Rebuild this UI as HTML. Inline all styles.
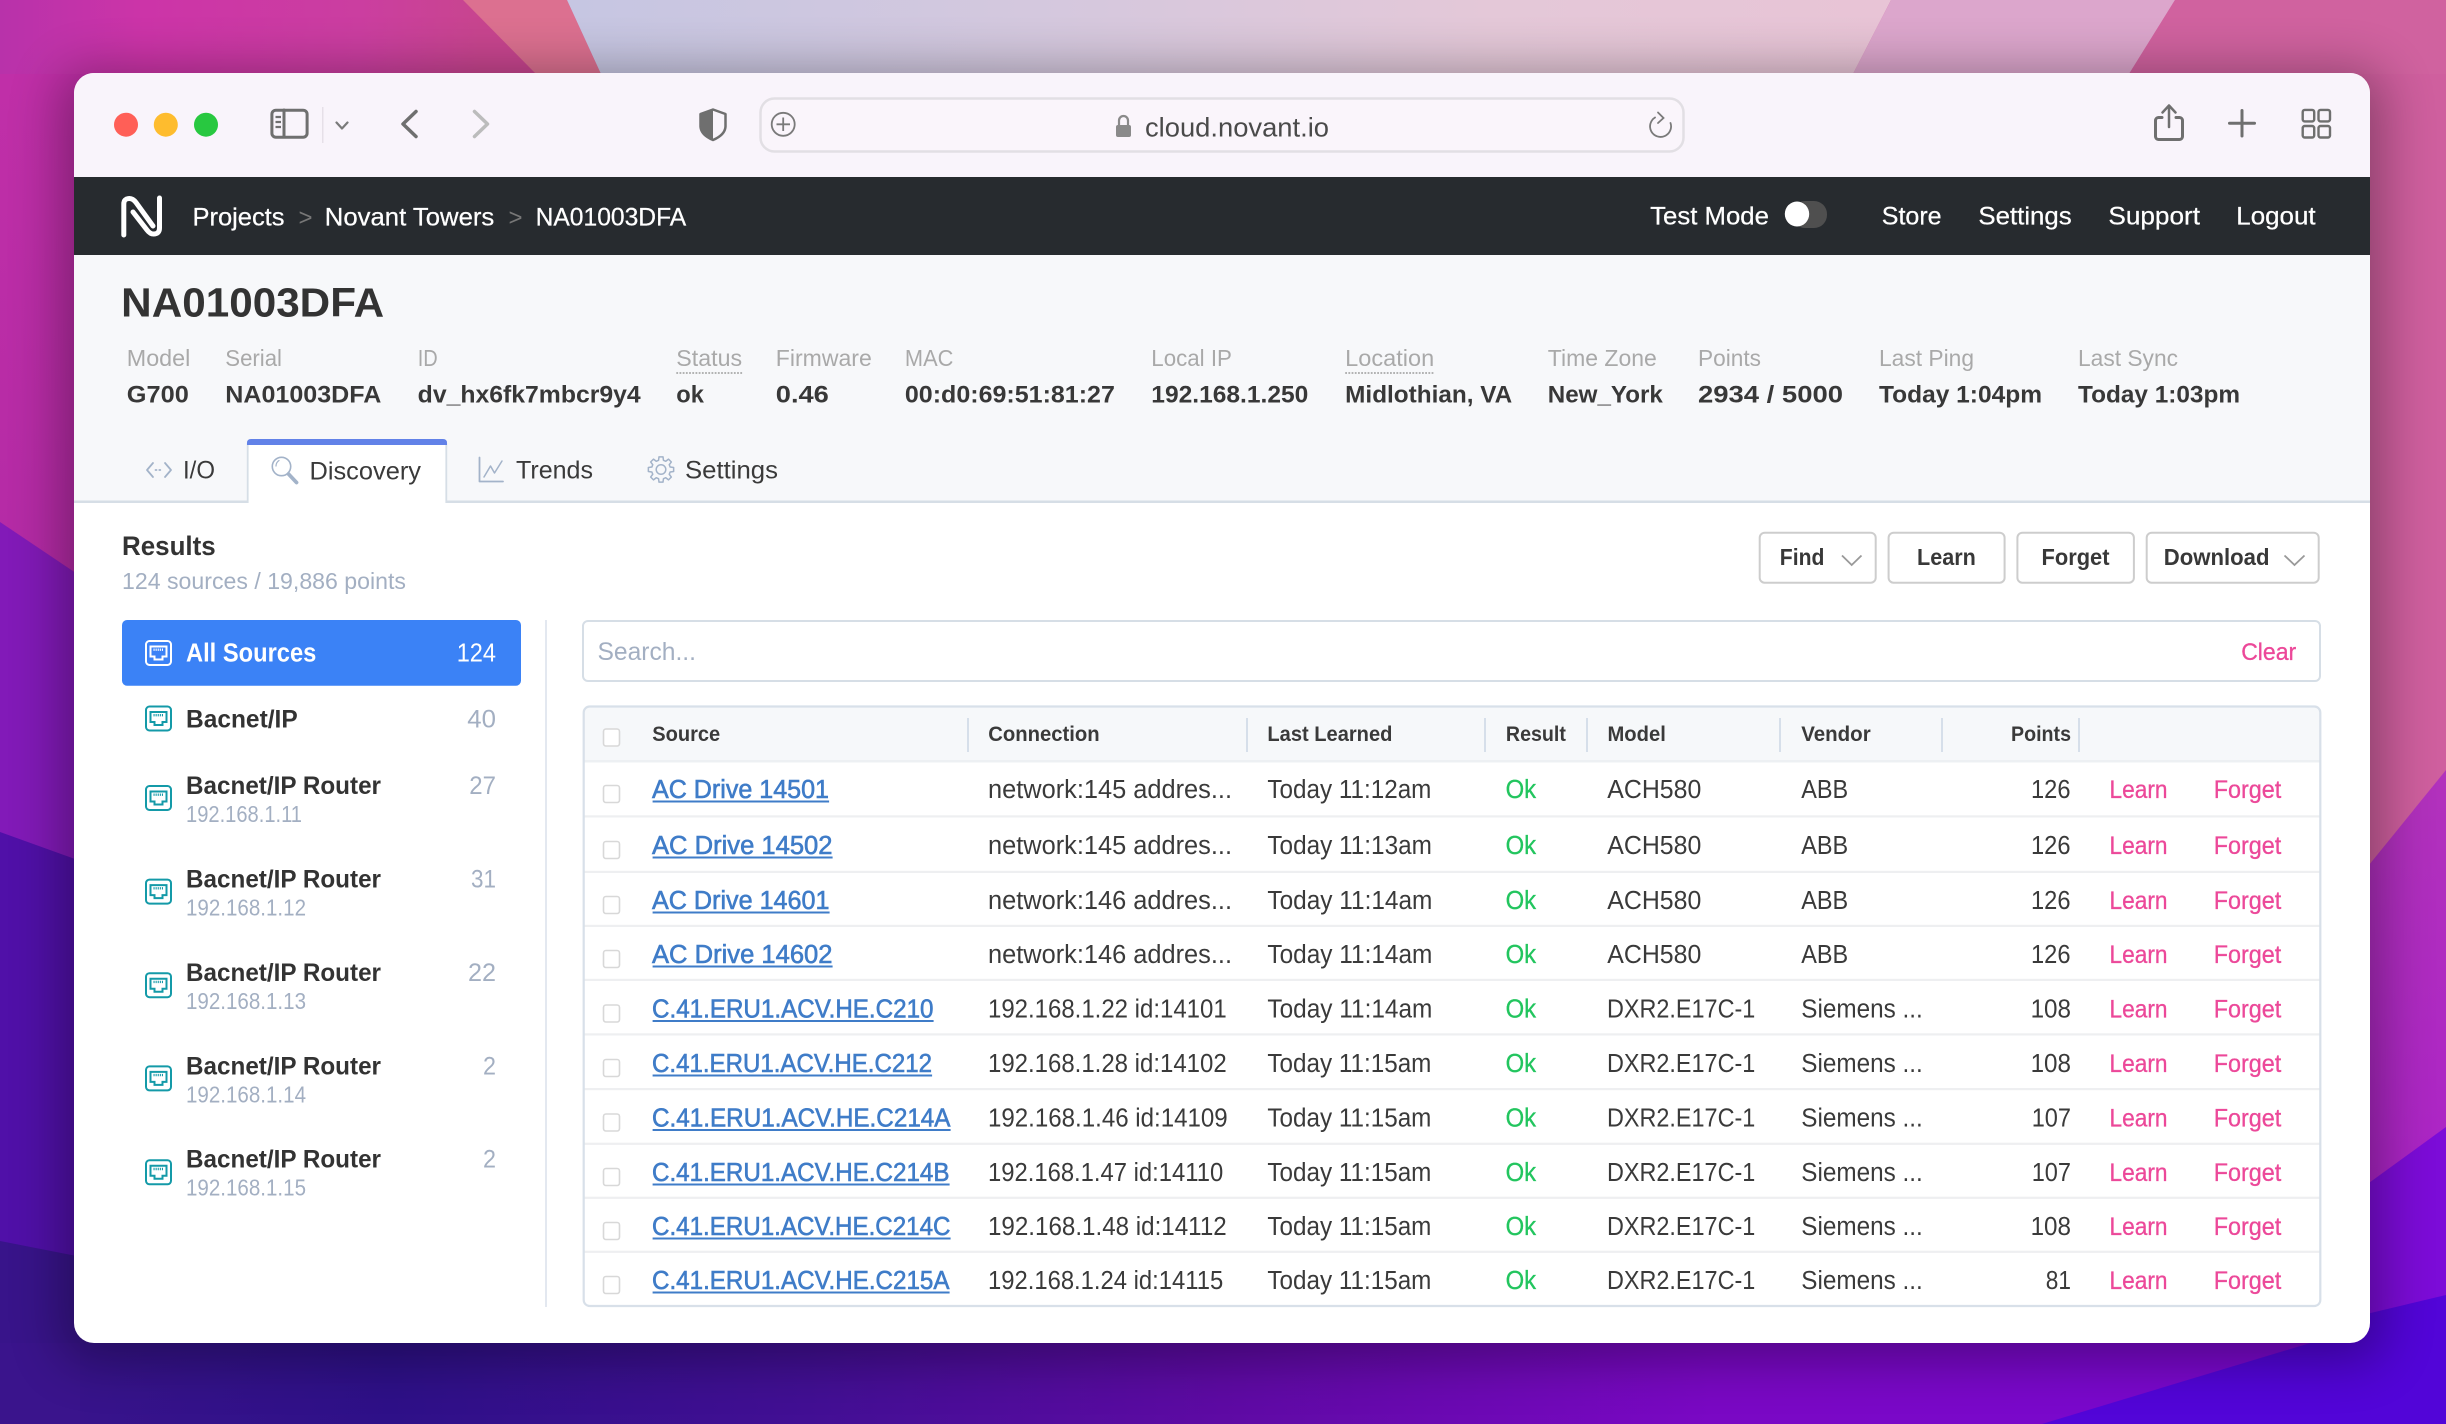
<!DOCTYPE html>
<html lang="en"><head><meta charset="utf-8"><title>cloud.novant.io</title>
<style>
html,body{margin:0;padding:0;width:2446px;height:1424px;overflow:hidden;background:#5a0aa0}
svg{display:block}
text{font-family:"Liberation Sans",Arial,sans-serif;white-space:pre}
.c{font-size:25.5px;fill:#3a3a3a}
.l{font-size:25.5px;fill:#3f7cc8;stroke:#3f7cc8;stroke-width:.6px}
.p{font-size:25px;fill:#ec4899;stroke:#ec4899;stroke-width:.3px}
.g{font-size:25.5px;fill:#22c55e;stroke:#22c55e;stroke-width:.3px}
.h{font-size:21.5px;font-weight:700;fill:#3a3a3a}
.k{font-size:23px;fill:#a9a9a9}
.v{font-size:24px;font-weight:700;fill:#383838}
.n{font-size:25px;fill:#fff;stroke:#fff;stroke-width:.25px}
.t{font-size:25px;fill:#3a3a3a}
.s{font-size:25px;font-weight:700;fill:#333}
.a{font-size:23.5px;fill:#a3afc2}
.m{font-size:25px;fill:#a3afc2}
.b{font-size:23.5px;font-weight:700;fill:#383838}
.ic{fill:none;stroke:#a3b3c9;stroke-width:1.8;stroke-linecap:round;stroke-linejoin:round}
.tb{fill:none;stroke:#6f6f6f;stroke-width:3;stroke-linecap:round;stroke-linejoin:round}
.cb{fill:#fff;stroke:#d8d8d8;stroke-width:1.6}
.sp{fill:#eeeff1}
.u{fill:#3f7cc8}
.vs{fill:#d6dfea}
</style></head><body>
<svg xmlns="http://www.w3.org/2000/svg" width="2446" height="1424" viewBox="0 0 2446 1424">
<defs>
<linearGradient id="gl" x1="0" y1="0" x2="0" y2="1"><stop offset="0" stop-color="#c230a8"/><stop offset="1" stop-color="#9f22a2"/></linearGradient>
<linearGradient id="gt" gradientUnits="userSpaceOnUse" x1="0" y1="0" x2="480" y2="0"><stop offset="0" stop-color="#b832aa"/><stop offset=".3" stop-color="#cc34a8"/><stop offset=".75" stop-color="#cb3ea0"/><stop offset="1" stop-color="#c8458f"/></linearGradient>
<linearGradient id="gv" gradientUnits="userSpaceOnUse" x1="570" y1="0" x2="1890" y2="0"><stop offset="0" stop-color="#c6c6e2"/><stop offset=".35" stop-color="#d4c8de"/><stop offset=".7" stop-color="#e4c8d8"/><stop offset="1" stop-color="#e8c4d6"/></linearGradient>
<linearGradient id="gb" gradientUnits="userSpaceOnUse" x1="0" y1="0" x2="2446" y2="0"><stop offset="0" stop-color="#3a148c"/><stop offset=".16" stop-color="#2e1088"/><stop offset=".33" stop-color="#420f94"/><stop offset=".5" stop-color="#5e0aa4"/><stop offset=".7" stop-color="#7a08c4"/><stop offset=".85" stop-color="#7a08cc"/><stop offset="1" stop-color="#7a08cc"/></linearGradient>
<linearGradient id="gr" x1="0" y1="0" x2="0" y2="1"><stop offset="0" stop-color="#b232bc"/><stop offset="1" stop-color="#a81ccc"/></linearGradient>
<filter id="sh" x="-10%" y="-10%" width="120%" height="120%"><feGaussianBlur stdDeviation="26"/></filter>
<clipPath id="win"><rect x="74" y="73" width="2296" height="1270" rx="20"/></clipPath>
<symbol id="port" viewBox="0 0 27 26" width="27" height="26" overflow="visible">
<rect x="1" y="1" width="25" height="24" rx="3.5" fill="none" stroke="currentColor" stroke-width="2"/>
<path d="M5.5 6.5H21.5V16.5H17.5V19.5H9.5V16.5H5.5Z" fill="none" stroke="currentColor" stroke-width="2"/>
<path d="M8.5 9.7H18.5" fill="none" stroke="currentColor" stroke-width="2.4" stroke-dasharray="1.1 1"/>
</symbol>
</defs>

<!-- wallpaper -->
<rect width="2446" height="1424" fill="#cf5f9e"/>
<rect x="0" y="0" width="300" height="1424" fill="url(#gl)"/>
<path d="M0 522L300 724V1424H0Z" fill="#821ab8"/>
<path d="M0 832L300 940V1424H0Z" fill="#5010a8"/>
<path d="M0 1241L300 1300V1424H0Z" fill="#38148a"/>
<rect x="0" y="0" width="610" height="74" fill="url(#gt)"/>
<path d="M463 0H567L601 74H536Z" fill="#dc7090"/>
<path d="M567 0H1891L1853 74H601Z" fill="url(#gv)"/>
<path d="M1891 0H2175L2129 74H1853Z" fill="#dca6cc"/>
<path d="M2175 0H2446V74H2129Z" fill="#d0629f"/>
<path d="M2300 950L2446 770V1424H2300Z" fill="url(#gr)"/>
<path d="M2300 1233L2446 1127V1424H2300Z" fill="#7c0cd8"/>
<path d="M2300 1330L2446 1295V1424H2300Z" fill="#5205d8"/>
<rect x="0" y="1343" width="2370" height="81" fill="url(#gb)"/>
<path d="M2370 1325L2042 1424H2446V1297Z" fill="#5205d8"/>
<rect x="0" y="1343" width="80" height="81" fill="#3a148c"/>
<rect x="60" y="70" width="2324" height="1292" rx="24" fill="#000" opacity=".32" filter="url(#sh)"/>

<!-- window -->
<g clip-path="url(#win)">
<rect x="74" y="73" width="2296" height="1270" fill="#fff"/>
<rect x="74" y="73" width="2296" height="104" fill="#f9f4fb"/>
<rect x="74" y="177" width="2296" height="78" fill="#272b2f"/>
<rect x="74" y="255" width="2296" height="246" fill="#f7f8fa"/>
<rect x="74" y="500.5" width="2296" height="2.5" fill="#d6dee6"/>
</g>

<!-- toolbar -->
<circle cx="126" cy="124.7" r="12" fill="#ff5f57"/>
<circle cx="165.8" cy="124.7" r="12" fill="#febc2e"/>
<circle cx="206" cy="124.7" r="12" fill="#28c840"/>
<rect x="271.9" y="110.2" width="35.2" height="27" rx="4" class="tb"/>
<path d="M284 110V137" class="tb"/>
<path d="M275.500 117H281M275.500 122H281M275.500 127H281" fill="none" stroke="#6f6f6f" stroke-width="2.200"/>
<rect x="322" y="107" width="1.500" height="36" fill="#e6e0e8"/>
<path d="M336.500 122.500L342 128.500L347.500 122.500" class="tb" style="stroke-width:2.2;stroke:#7a7a7a"/>
<path d="M416 111.500L403 124L416 136.500" class="tb" style="stroke-width:3.5"/>
<path d="M474.500 111.500L487.500 124L474.500 136.500" fill="none" stroke="#bcbcbc" stroke-width="3.500" stroke-linecap="round" stroke-linejoin="round"/>
<path d="M713 109.500L700.500 114V126C700.500 133 706 137 713 140C720 137 725.500 133 725.500 126V114Z" fill="none" stroke="#6f6f6f" stroke-width="2.500" stroke-linejoin="round"/>
<path d="M713 109.500L700.500 114V126C700.500 133 706 137 713 140Z" fill="#6f6f6f"/>
<rect x="760.500" y="98.500" width="923" height="53" rx="14" fill="#faf5fb" stroke="#e2dfe4" stroke-width="2.500"/>
<circle cx="783.200" cy="124.300" r="11.500" fill="none" stroke="#7a7a7a" stroke-width="1.800"/>
<path d="M783.200 117.500V131M776.500 124.300H790" stroke="#7a7a7a" stroke-width="1.800"/>
<rect x="1116" y="125" width="15" height="12" rx="2" fill="#8a8a8a"/>
<path d="M1119 125V120.500A4.500 4.500 0 0 1 1128 120.500V125" fill="none" stroke="#8a8a8a" stroke-width="2.200"/>
<text x="1145" y="136.500" font-size="27" fill="#4a4a4a" textLength="184" lengthAdjust="spacingAndGlyphs">cloud.novant.io</text>
<path d="M1655 117.500A10.500 10.500 0 1 0 1670.500 123" fill="none" stroke="#7a7a7a" stroke-width="1.800" stroke-linecap="round"/>
<path d="M1658 112.500L1663.500 118L1658 123" fill="none" stroke="#7a7a7a" stroke-width="1.800" stroke-linecap="round"/>
<path d="M2162 117.500H2158.500A3 3 0 0 0 2155.500 120.500V136.500A3 3 0 0 0 2158.500 139.500H2179.500A3 3 0 0 0 2182.500 136.500V120.500A3 3 0 0 0 2179.500 117.500H2176" class="tb"/>
<path d="M2169 106V127M2162.500 112.500L2169 105.500L2175.500 112.500" class="tb" style="stroke-width:2.500"/>
<path d="M2242 110.500V136M2229.500 123.300H2254.500" stroke="#6f6f6f" stroke-width="3" stroke-linecap="round"/>
<rect x="2302.700" y="109.900" width="11.500" height="11.500" rx="2" class="tb" style="stroke-width:2.400"/>
<rect x="2318.500" y="109.900" width="11.500" height="11.500" rx="2" class="tb" style="stroke-width:2.400"/>
<rect x="2302.700" y="126" width="11.500" height="11.500" rx="2" class="tb" style="stroke-width:2.400"/>
<rect x="2318.500" y="126" width="11.500" height="11.500" rx="2" class="tb" style="stroke-width:2.400"/>

<!-- nav -->
<path d="M123.800 235V204Q123.800 198.500 129.500 198.500Q133 198.500 136 202.500L153 226" fill="none" stroke="#fff" stroke-width="5" stroke-linecap="round"/>
<path d="M159.500 198V228Q159.500 234 153.500 234Q150 234 147 230L133 212" fill="none" stroke="#fff" stroke-width="5" stroke-linecap="round"/>
<text class="n" x="192.500" y="225.300" textLength="92" lengthAdjust="spacingAndGlyphs">Projects</text>
<text x="298.500" y="225.300" font-size="24" fill="#777" textLength="14" lengthAdjust="spacingAndGlyphs">&gt;</text>
<text class="n" x="324.800" y="225.300" textLength="169.500" lengthAdjust="spacingAndGlyphs">Novant Towers</text>
<text x="508.500" y="225.300" font-size="24" fill="#777" textLength="14" lengthAdjust="spacingAndGlyphs">&gt;</text>
<text class="n" x="535.600" y="225.300" textLength="150.600" lengthAdjust="spacingAndGlyphs">NA01003DFA</text>
<text class="n" x="1650.200" y="224.700" textLength="118.700" lengthAdjust="spacingAndGlyphs">Test Mode</text>
<rect x="1792" y="201" width="35" height="27" rx="13" fill="#4f4f4f"/>
<ellipse cx="1797" cy="214" rx="12.200" ry="12.500" fill="#fff"/>
<text class="n" x="1881.800" y="224.700" textLength="59.800" lengthAdjust="spacingAndGlyphs">Store</text>
<text class="n" x="1978.400" y="224.700" textLength="93.300" lengthAdjust="spacingAndGlyphs">Settings</text>
<text class="n" x="2108.400" y="224.700" textLength="91.600" lengthAdjust="spacingAndGlyphs">Support</text>
<text class="n" x="2236.300" y="224.700" textLength="79.300" lengthAdjust="spacingAndGlyphs">Logout</text>

<!-- header -->
<text x="121.200" y="316.700" font-size="40.500" font-weight="700" fill="#333" textLength="263" lengthAdjust="spacingAndGlyphs">NA01003DFA</text>
<g>
<text class="k" x="126.800" y="366" textLength="63.500" lengthAdjust="spacingAndGlyphs">Model</text>
<text class="k" x="225.300" y="366" textLength="56.700" lengthAdjust="spacingAndGlyphs">Serial</text>
<text class="k" x="417.700" y="366" textLength="20" lengthAdjust="spacingAndGlyphs">ID</text>
<text class="k" x="676.300" y="366" textLength="65.800" lengthAdjust="spacingAndGlyphs">Status</text>
<text class="k" x="775.800" y="366" textLength="96" lengthAdjust="spacingAndGlyphs">Firmware</text>
<text class="k" x="904.900" y="366" textLength="48.500" lengthAdjust="spacingAndGlyphs">MAC</text>
<text class="k" x="1151.300" y="366" textLength="80.600" lengthAdjust="spacingAndGlyphs">Local IP</text>
<text class="k" x="1345.200" y="366" textLength="89" lengthAdjust="spacingAndGlyphs">Location</text>
<text class="k" x="1547.800" y="366" textLength="109" lengthAdjust="spacingAndGlyphs">Time Zone</text>
<text class="k" x="1698" y="366" textLength="63" lengthAdjust="spacingAndGlyphs">Points</text>
<text class="k" x="1879" y="366" textLength="95" lengthAdjust="spacingAndGlyphs">Last Ping</text>
<text class="k" x="2078" y="366" textLength="100" lengthAdjust="spacingAndGlyphs">Last Sync</text>
<path d="M676.300 373H743M1345.200 373H1434" stroke="#a9a9a9" stroke-width="1.800" stroke-dasharray="1.800 1.400"/>
<text class="v" x="126.800" y="402.700" textLength="62" lengthAdjust="spacingAndGlyphs">G700</text>
<text class="v" x="225.300" y="402.700" textLength="156" lengthAdjust="spacingAndGlyphs">NA01003DFA</text>
<text class="v" x="417.700" y="402.700" textLength="223" lengthAdjust="spacingAndGlyphs">dv_hx6fk7mbcr9y4</text>
<text class="v" x="676.300" y="402.700" textLength="27.600" lengthAdjust="spacingAndGlyphs">ok</text>
<text class="v" x="775.800" y="402.700" textLength="53" lengthAdjust="spacingAndGlyphs">0.46</text>
<text class="v" x="904.900" y="402.700" textLength="210" lengthAdjust="spacingAndGlyphs">00:d0:69:51:81:27</text>
<text class="v" x="1151.300" y="402.700" textLength="157" lengthAdjust="spacingAndGlyphs">192.168.1.250</text>
<text class="v" x="1345.200" y="402.700" textLength="167" lengthAdjust="spacingAndGlyphs">Midlothian, VA</text>
<text class="v" x="1547.800" y="402.700" textLength="115" lengthAdjust="spacingAndGlyphs">New_York</text>
<text class="v" x="1698" y="402.700" textLength="145" lengthAdjust="spacingAndGlyphs">2934 / 5000</text>
<text class="v" x="1879" y="402.700" textLength="163" lengthAdjust="spacingAndGlyphs">Today 1:04pm</text>
<text class="v" x="2078" y="402.700" textLength="162" lengthAdjust="spacingAndGlyphs">Today 1:03pm</text>
</g>

<!-- tabs -->
<path d="M247.700 503V444H446.300V503" fill="#fff" stroke="#d6dee6" stroke-width="1.800"/>
<path d="M247 445V443Q247 439 251 439H443Q447 439 447 443V445Z" fill="#6282e8"/>
<path d="M153 463L147 470L153 477M165 463L171 470L165 477" class="ic"/>
<path d="M155.500 470H163" class="ic" stroke-dasharray="1 2.800"/>
<text class="t" x="183" y="478.300" textLength="32" lengthAdjust="spacingAndGlyphs">I/O</text>
<circle cx="281.500" cy="466.500" r="9.200" class="ic" style="stroke-width:1.600"/>
<path d="M279 460.500Q276 462.500 276 466" class="ic" style="stroke-width:1.200"/>
<path d="M288.500 474L296.500 482.500" fill="none" stroke="#a3b3c9" stroke-width="3.800" stroke-linecap="round"/>
<text class="t" x="309.500" y="479.300" textLength="111.500" lengthAdjust="spacingAndGlyphs">Discovery</text>
<path d="M479.500 457.500V481.500H503" class="ic"/>
<path d="M484 477L490.500 466L494.500 473L502 461" class="ic" style="stroke-width:1.500"/>
<text class="t" x="516" y="478.300" textLength="77" lengthAdjust="spacingAndGlyphs">Trends</text>
<g transform="translate(661,469.500)">
<circle r="4.800" class="ic" style="stroke-width:1.500"/>
<path d="M-2.460 -9.180L-2 -12.640H2L2.460 -9.180L4.750 -8.230L7.520 -10.360L10.360 -7.520L8.230 -4.750L9.180 -2.460L12.640 -2V2L9.180 2.460L8.230 4.750L10.360 7.520L7.520 10.360L4.750 8.230L2.460 9.180L2 12.640H-2L-2.460 9.180L-4.750 8.230L-7.520 10.360L-10.360 7.520L-8.230 4.750L-9.180 2.460L-12.640 2V-2L-9.180 -2.460L-8.230 -4.750L-10.360 -7.520L-7.520 -10.360L-4.750 -8.230Z" class="ic" style="stroke-width:1.500"/>
</g>
<text class="t" x="685" y="478.300" textLength="93" lengthAdjust="spacingAndGlyphs">Settings</text>

<!-- results head -->
<text x="122" y="555" font-size="26.500" font-weight="700" fill="#333" textLength="93.700" lengthAdjust="spacingAndGlyphs">Results</text>
<text class="a" x="122" y="589" textLength="284" lengthAdjust="spacingAndGlyphs">124 sources / 19,886 points</text>

<!-- buttons -->
<rect x="1759.700" y="532.700" width="116" height="50" rx="5" fill="#fff" stroke="#cdcdcd" stroke-width="2"/>
<rect x="1888.600" y="532.700" width="116" height="50" rx="5" fill="#fff" stroke="#cdcdcd" stroke-width="2"/>
<rect x="2017.400" y="532.700" width="116.500" height="50" rx="5" fill="#fff" stroke="#cdcdcd" stroke-width="2"/>
<rect x="2146.700" y="532.700" width="172" height="50" rx="5" fill="#fff" stroke="#cdcdcd" stroke-width="2"/>
<text class="b" x="1779.800" y="565" textLength="44.600" lengthAdjust="spacingAndGlyphs">Find</text>
<path d="M1842 555.500L1851.700 565L1861.500 555.500" fill="none" stroke="#999" stroke-width="1.800"/>
<text class="b" x="1917" y="565" textLength="58.800" lengthAdjust="spacingAndGlyphs">Learn</text>
<text class="b" x="2041.500" y="565" textLength="68" lengthAdjust="spacingAndGlyphs">Forget</text>
<text class="b" x="2163.800" y="565" textLength="105.700" lengthAdjust="spacingAndGlyphs">Download</text>
<path d="M2284.500 555.500L2294.500 565L2304.500 555.500" fill="none" stroke="#999" stroke-width="1.800"/>

<!-- sidebar -->
<rect x="122" y="620" width="399" height="65.700" rx="5" fill="#3b82f6"/>
<use href="#port" x="145" y="640" color="#fff"/>
<text x="186" y="661.700" font-size="25.500" font-weight="700" fill="#fff" textLength="130.300" lengthAdjust="spacingAndGlyphs">All Sources</text>
<text x="456.700" y="661.700" font-size="25.500" fill="#fff" textLength="39.300" lengthAdjust="spacingAndGlyphs">124</text>
<use href="#port" x="145" y="705.500" color="#149aa8"/>
<text class="s" x="186" y="727.700" textLength="111.700" lengthAdjust="spacingAndGlyphs">Bacnet/IP</text>
<text class="m" x="467.300" y="727.700" textLength="28.700" lengthAdjust="spacingAndGlyphs">40</text>
<use href="#port" x="145" y="785" color="#149aa8"/>
<text class="s" x="186" y="794" textLength="195" lengthAdjust="spacingAndGlyphs">Bacnet/IP Router</text>
<text class="a" x="186" y="822" textLength="116" lengthAdjust="spacingAndGlyphs">192.168.1.11</text>
<text class="m" x="469.300" y="794" textLength="26.700" lengthAdjust="spacingAndGlyphs">27</text>
<use href="#port" x="145" y="878.600" color="#149aa8"/>
<text class="s" x="186" y="887.600" textLength="195" lengthAdjust="spacingAndGlyphs">Bacnet/IP Router</text>
<text class="a" x="186" y="915.500" textLength="120" lengthAdjust="spacingAndGlyphs">192.168.1.12</text>
<text class="m" x="471" y="887.600" textLength="25" lengthAdjust="spacingAndGlyphs">31</text>
<use href="#port" x="145" y="972.200" color="#149aa8"/>
<text class="s" x="186" y="981.200" textLength="195" lengthAdjust="spacingAndGlyphs">Bacnet/IP Router</text>
<text class="a" x="186" y="1009.200" textLength="120" lengthAdjust="spacingAndGlyphs">192.168.1.13</text>
<text class="m" x="468" y="981.200" textLength="28" lengthAdjust="spacingAndGlyphs">22</text>
<use href="#port" x="145" y="1065.400" color="#149aa8"/>
<text class="s" x="186" y="1074.400" textLength="195" lengthAdjust="spacingAndGlyphs">Bacnet/IP Router</text>
<text class="a" x="186" y="1102.500" textLength="120" lengthAdjust="spacingAndGlyphs">192.168.1.14</text>
<text class="m" x="483" y="1074.400" textLength="13" lengthAdjust="spacingAndGlyphs">2</text>
<use href="#port" x="145" y="1159.300" color="#149aa8"/>
<text class="s" x="186" y="1167.700" textLength="195" lengthAdjust="spacingAndGlyphs">Bacnet/IP Router</text>
<text class="a" x="186" y="1195.500" textLength="120" lengthAdjust="spacingAndGlyphs">192.168.1.15</text>
<text class="m" x="483" y="1167.700" textLength="13" lengthAdjust="spacingAndGlyphs">2</text>
<rect x="545" y="620" width="2" height="687" fill="#e3e8f0"/>

<!-- search -->
<rect x="583" y="621" width="1737" height="60" rx="5" fill="#fff" stroke="#d6dee6" stroke-width="2"/>
<text x="597.500" y="660" font-size="25" fill="#a3afc2" textLength="98.500" lengthAdjust="spacingAndGlyphs">Search...</text>
<text x="2241.200" y="660" font-size="24" fill="#ec4899" stroke="#ec4899" stroke-width=".3" textLength="55" lengthAdjust="spacingAndGlyphs">Clear</text>

<!-- table -->
<path d="M584 761V713Q584 707 590 707H2314Q2320 707 2320 713V761Z" fill="#f6f8fa"/>
<rect x="584" y="760" width="1736" height="2.500" fill="#edf0f3"/>
<rect x="584" y="815.300" width="1736" height="2.200" class="sp"/>
<rect x="584" y="870.800" width="1736" height="2.200" class="sp"/>
<rect x="584" y="924.800" width="1736" height="2.200" class="sp"/>
<rect x="584" y="978.800" width="1736" height="2.200" class="sp"/>
<rect x="584" y="1033.300" width="1736" height="2.200" class="sp"/>
<rect x="584" y="1088" width="1736" height="2.200" class="sp"/>
<rect x="584" y="1142.700" width="1736" height="2.200" class="sp"/>
<rect x="584" y="1196.700" width="1736" height="2.200" class="sp"/>
<rect x="584" y="1250.700" width="1736" height="2.200" class="sp"/>
<rect x="967" y="718" width="2" height="34" class="vs"/>
<rect x="1246" y="718" width="2" height="34" class="vs"/>
<rect x="1484" y="718" width="2" height="34" class="vs"/>
<rect x="1586" y="718" width="2" height="34" class="vs"/>
<rect x="1779" y="718" width="2" height="34" class="vs"/>
<rect x="1941" y="718" width="2" height="34" class="vs"/>
<rect x="2078" y="718" width="2" height="34" class="vs"/>
<rect x="603.500" y="729" width="16" height="17" rx="2.500" class="cb"/>
<text class="h" x="652.200" y="741" textLength="68" lengthAdjust="spacingAndGlyphs">Source</text>
<text class="h" x="988.200" y="741" textLength="111.500" lengthAdjust="spacingAndGlyphs">Connection</text>
<text class="h" x="1267.400" y="741" textLength="125" lengthAdjust="spacingAndGlyphs">Last Learned</text>
<text class="h" x="1505.900" y="741" textLength="60" lengthAdjust="spacingAndGlyphs">Result</text>
<text class="h" x="1607.500" y="741" textLength="58.300" lengthAdjust="spacingAndGlyphs">Model</text>
<text class="h" x="1801.200" y="741" textLength="69.500" lengthAdjust="spacingAndGlyphs">Vendor</text>
<text class="h" x="2011" y="741" textLength="60" lengthAdjust="spacingAndGlyphs">Points</text>

<g transform="translate(0,798)">
<rect x="603.500" y="-12.500" width="16" height="17" rx="2.500" class="cb"/>
<text class="l" x="652" y="0" textLength="177" lengthAdjust="spacingAndGlyphs">AC Drive 14501</text><rect class="u" x="652.600" y="2.500" width="176.500" height="2"/>
<text class="c" x="988" y="0" textLength="244" lengthAdjust="spacingAndGlyphs">network:145 addres...</text>
<text class="c" x="1267.400" y="0" textLength="164" lengthAdjust="spacingAndGlyphs">Today 11:12am</text>
<text class="g" x="1505.600" y="0" textLength="30.500" lengthAdjust="spacingAndGlyphs">Ok</text>
<text class="c" x="1607.300" y="0" textLength="94" lengthAdjust="spacingAndGlyphs">ACH580</text>
<text class="c" x="1801.200" y="0" textLength="47" lengthAdjust="spacingAndGlyphs">ABB</text>
<text class="c" x="2031" y="0" textLength="39.500" lengthAdjust="spacingAndGlyphs">126</text>
<text class="p" x="2109.500" y="0" textLength="58" lengthAdjust="spacingAndGlyphs">Learn</text>
<text class="p" x="2213.700" y="0" textLength="67.500" lengthAdjust="spacingAndGlyphs">Forget</text>
</g>
<g transform="translate(0,854)">
<rect x="603.500" y="-12.500" width="16" height="17" rx="2.500" class="cb"/>
<text class="l" x="652" y="0" textLength="180.500" lengthAdjust="spacingAndGlyphs">AC Drive 14502</text><rect class="u" x="652.600" y="2.500" width="180" height="2"/>
<text class="c" x="988" y="0" textLength="244" lengthAdjust="spacingAndGlyphs">network:145 addres...</text>
<text class="c" x="1267.400" y="0" textLength="164.500" lengthAdjust="spacingAndGlyphs">Today 11:13am</text>
<text class="g" x="1505.600" y="0" textLength="30.500" lengthAdjust="spacingAndGlyphs">Ok</text>
<text class="c" x="1607.300" y="0" textLength="94" lengthAdjust="spacingAndGlyphs">ACH580</text>
<text class="c" x="1801.200" y="0" textLength="47" lengthAdjust="spacingAndGlyphs">ABB</text>
<text class="c" x="2031" y="0" textLength="39.500" lengthAdjust="spacingAndGlyphs">126</text>
<text class="p" x="2109.500" y="0" textLength="58" lengthAdjust="spacingAndGlyphs">Learn</text>
<text class="p" x="2213.700" y="0" textLength="67.500" lengthAdjust="spacingAndGlyphs">Forget</text>
</g>
<g transform="translate(0,909)">
<rect x="603.500" y="-12.500" width="16" height="17" rx="2.500" class="cb"/>
<text class="l" x="652" y="0" textLength="177.500" lengthAdjust="spacingAndGlyphs">AC Drive 14601</text><rect class="u" x="652.600" y="2.500" width="177" height="2"/>
<text class="c" x="988" y="0" textLength="244" lengthAdjust="spacingAndGlyphs">network:146 addres...</text>
<text class="c" x="1267.400" y="0" textLength="165" lengthAdjust="spacingAndGlyphs">Today 11:14am</text>
<text class="g" x="1505.600" y="0" textLength="30.500" lengthAdjust="spacingAndGlyphs">Ok</text>
<text class="c" x="1607.300" y="0" textLength="94" lengthAdjust="spacingAndGlyphs">ACH580</text>
<text class="c" x="1801.200" y="0" textLength="47" lengthAdjust="spacingAndGlyphs">ABB</text>
<text class="c" x="2031" y="0" textLength="39.500" lengthAdjust="spacingAndGlyphs">126</text>
<text class="p" x="2109.500" y="0" textLength="58" lengthAdjust="spacingAndGlyphs">Learn</text>
<text class="p" x="2213.700" y="0" textLength="67.500" lengthAdjust="spacingAndGlyphs">Forget</text>
</g>
<g transform="translate(0,963)">
<rect x="603.500" y="-12.500" width="16" height="17" rx="2.500" class="cb"/>
<text class="l" x="652" y="0" textLength="180.500" lengthAdjust="spacingAndGlyphs">AC Drive 14602</text><rect class="u" x="652.600" y="2.500" width="180" height="2"/>
<text class="c" x="988" y="0" textLength="244" lengthAdjust="spacingAndGlyphs">network:146 addres...</text>
<text class="c" x="1267.400" y="0" textLength="165" lengthAdjust="spacingAndGlyphs">Today 11:14am</text>
<text class="g" x="1505.600" y="0" textLength="30.500" lengthAdjust="spacingAndGlyphs">Ok</text>
<text class="c" x="1607.300" y="0" textLength="94" lengthAdjust="spacingAndGlyphs">ACH580</text>
<text class="c" x="1801.200" y="0" textLength="47" lengthAdjust="spacingAndGlyphs">ABB</text>
<text class="c" x="2031" y="0" textLength="39.500" lengthAdjust="spacingAndGlyphs">126</text>
<text class="p" x="2109.500" y="0" textLength="58" lengthAdjust="spacingAndGlyphs">Learn</text>
<text class="p" x="2213.700" y="0" textLength="67.500" lengthAdjust="spacingAndGlyphs">Forget</text>
</g>
<g transform="translate(0,1017.500)">
<rect x="603.500" y="-12.500" width="16" height="17" rx="2.500" class="cb"/>
<text class="l" x="652" y="0" textLength="281.500" lengthAdjust="spacingAndGlyphs">C.41.ERU1.ACV.HE.C210</text><rect class="u" x="652.600" y="2.500" width="281" height="2"/>
<text class="c" x="988" y="0" textLength="238.700" lengthAdjust="spacingAndGlyphs">192.168.1.22 id:14101</text>
<text class="c" x="1267.400" y="0" textLength="165" lengthAdjust="spacingAndGlyphs">Today 11:14am</text>
<text class="g" x="1505.600" y="0" textLength="30.500" lengthAdjust="spacingAndGlyphs">Ok</text>
<text class="c" x="1607" y="0" textLength="148.300" lengthAdjust="spacingAndGlyphs">DXR2.E17C-1</text>
<text class="c" x="1801.300" y="0" textLength="121.400" lengthAdjust="spacingAndGlyphs">Siemens ...</text>
<text class="c" x="2030.600" y="0" textLength="40.400" lengthAdjust="spacingAndGlyphs">108</text>
<text class="p" x="2109.500" y="0" textLength="58" lengthAdjust="spacingAndGlyphs">Learn</text>
<text class="p" x="2213.700" y="0" textLength="67.500" lengthAdjust="spacingAndGlyphs">Forget</text>
</g>
<g transform="translate(0,1072)">
<rect x="603.500" y="-12.500" width="16" height="17" rx="2.500" class="cb"/>
<text class="l" x="652" y="0" textLength="280" lengthAdjust="spacingAndGlyphs">C.41.ERU1.ACV.HE.C212</text><rect class="u" x="652.600" y="2.500" width="279.500" height="2"/>
<text class="c" x="988" y="0" textLength="238.700" lengthAdjust="spacingAndGlyphs">192.168.1.28 id:14102</text>
<text class="c" x="1267.400" y="0" textLength="164" lengthAdjust="spacingAndGlyphs">Today 11:15am</text>
<text class="g" x="1505.600" y="0" textLength="30.500" lengthAdjust="spacingAndGlyphs">Ok</text>
<text class="c" x="1607" y="0" textLength="148.300" lengthAdjust="spacingAndGlyphs">DXR2.E17C-1</text>
<text class="c" x="1801.300" y="0" textLength="121.400" lengthAdjust="spacingAndGlyphs">Siemens ...</text>
<text class="c" x="2030.600" y="0" textLength="40.400" lengthAdjust="spacingAndGlyphs">108</text>
<text class="p" x="2109.500" y="0" textLength="58" lengthAdjust="spacingAndGlyphs">Learn</text>
<text class="p" x="2213.700" y="0" textLength="67.500" lengthAdjust="spacingAndGlyphs">Forget</text>
</g>
<g transform="translate(0,1126.500)">
<rect x="603.500" y="-12.500" width="16" height="17" rx="2.500" class="cb"/>
<text class="l" x="652" y="0" textLength="298.500" lengthAdjust="spacingAndGlyphs">C.41.ERU1.ACV.HE.C214A</text><rect class="u" x="652.600" y="2.500" width="298" height="2"/>
<text class="c" x="988" y="0" textLength="239.700" lengthAdjust="spacingAndGlyphs">192.168.1.46 id:14109</text>
<text class="c" x="1267.400" y="0" textLength="164" lengthAdjust="spacingAndGlyphs">Today 11:15am</text>
<text class="g" x="1505.600" y="0" textLength="30.500" lengthAdjust="spacingAndGlyphs">Ok</text>
<text class="c" x="1607" y="0" textLength="148.300" lengthAdjust="spacingAndGlyphs">DXR2.E17C-1</text>
<text class="c" x="1801.300" y="0" textLength="121.400" lengthAdjust="spacingAndGlyphs">Siemens ...</text>
<text class="c" x="2031.700" y="0" textLength="39.300" lengthAdjust="spacingAndGlyphs">107</text>
<text class="p" x="2109.500" y="0" textLength="58" lengthAdjust="spacingAndGlyphs">Learn</text>
<text class="p" x="2213.700" y="0" textLength="67.500" lengthAdjust="spacingAndGlyphs">Forget</text>
</g>
<g transform="translate(0,1181)">
<rect x="603.500" y="-12.500" width="16" height="17" rx="2.500" class="cb"/>
<text class="l" x="652" y="0" textLength="297.500" lengthAdjust="spacingAndGlyphs">C.41.ERU1.ACV.HE.C214B</text><rect class="u" x="652.600" y="2.500" width="297" height="2"/>
<text class="c" x="988" y="0" textLength="235.200" lengthAdjust="spacingAndGlyphs">192.168.1.47 id:14110</text>
<text class="c" x="1267.400" y="0" textLength="164" lengthAdjust="spacingAndGlyphs">Today 11:15am</text>
<text class="g" x="1505.600" y="0" textLength="30.500" lengthAdjust="spacingAndGlyphs">Ok</text>
<text class="c" x="1607" y="0" textLength="148.300" lengthAdjust="spacingAndGlyphs">DXR2.E17C-1</text>
<text class="c" x="1801.300" y="0" textLength="121.400" lengthAdjust="spacingAndGlyphs">Siemens ...</text>
<text class="c" x="2031.700" y="0" textLength="39.300" lengthAdjust="spacingAndGlyphs">107</text>
<text class="p" x="2109.500" y="0" textLength="58" lengthAdjust="spacingAndGlyphs">Learn</text>
<text class="p" x="2213.700" y="0" textLength="67.500" lengthAdjust="spacingAndGlyphs">Forget</text>
</g>
<g transform="translate(0,1235)">
<rect x="603.500" y="-12.500" width="16" height="17" rx="2.500" class="cb"/>
<text class="l" x="652" y="0" textLength="298.500" lengthAdjust="spacingAndGlyphs">C.41.ERU1.ACV.HE.C214C</text><rect class="u" x="652.600" y="2.500" width="298" height="2"/>
<text class="c" x="988" y="0" textLength="238.700" lengthAdjust="spacingAndGlyphs">192.168.1.48 id:14112</text>
<text class="c" x="1267.400" y="0" textLength="164" lengthAdjust="spacingAndGlyphs">Today 11:15am</text>
<text class="g" x="1505.600" y="0" textLength="30.500" lengthAdjust="spacingAndGlyphs">Ok</text>
<text class="c" x="1607" y="0" textLength="148.300" lengthAdjust="spacingAndGlyphs">DXR2.E17C-1</text>
<text class="c" x="1801.300" y="0" textLength="121.400" lengthAdjust="spacingAndGlyphs">Siemens ...</text>
<text class="c" x="2030.600" y="0" textLength="40.400" lengthAdjust="spacingAndGlyphs">108</text>
<text class="p" x="2109.500" y="0" textLength="58" lengthAdjust="spacingAndGlyphs">Learn</text>
<text class="p" x="2213.700" y="0" textLength="67.500" lengthAdjust="spacingAndGlyphs">Forget</text>
</g>
<g transform="translate(0,1289)">
<rect x="603.500" y="-12.500" width="16" height="17" rx="2.500" class="cb"/>
<text class="l" x="652" y="0" textLength="297.500" lengthAdjust="spacingAndGlyphs">C.41.ERU1.ACV.HE.C215A</text><rect class="u" x="652.600" y="2.500" width="297" height="2"/>
<text class="c" x="988" y="0" textLength="235.200" lengthAdjust="spacingAndGlyphs">192.168.1.24 id:14115</text>
<text class="c" x="1267.400" y="0" textLength="164" lengthAdjust="spacingAndGlyphs">Today 11:15am</text>
<text class="g" x="1505.600" y="0" textLength="30.500" lengthAdjust="spacingAndGlyphs">Ok</text>
<text class="c" x="1607" y="0" textLength="148.300" lengthAdjust="spacingAndGlyphs">DXR2.E17C-1</text>
<text class="c" x="1801.300" y="0" textLength="121.400" lengthAdjust="spacingAndGlyphs">Siemens ...</text>
<text class="c" x="2045.800" y="0" textLength="25.200" lengthAdjust="spacingAndGlyphs">81</text>
<text class="p" x="2109.500" y="0" textLength="58" lengthAdjust="spacingAndGlyphs">Learn</text>
<text class="p" x="2213.700" y="0" textLength="67.500" lengthAdjust="spacingAndGlyphs">Forget</text>
</g>
<rect x="583.700" y="706.500" width="1736.600" height="599.500" rx="6" fill="none" stroke="#d8e0e9" stroke-width="2.200"/>
</svg>
</body></html>
